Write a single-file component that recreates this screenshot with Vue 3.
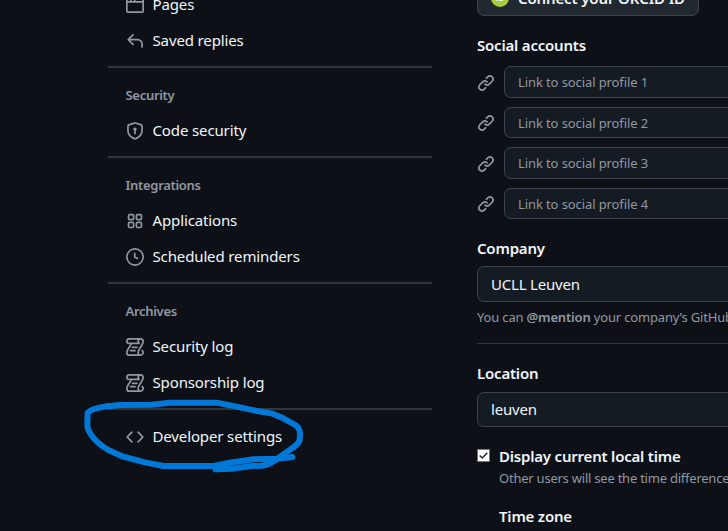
<script setup>
const icons = {
  browser: 'M0 2.75C0 1.784.784 1 1.75 1h12.5c.966 0 1.75.784 1.75 1.75v10.5A1.75 1.75 0 0 1 14.25 15H1.75A1.75 1.75 0 0 1 0 13.25ZM14.5 6h-13v7.25c0 .138.112.25.25.25h12.5a.25.25 0 0 0 .25-.25Zm-6-3.5v2h6V2.75a.25.25 0 0 0-.25-.25ZM5 2.5v2h2v-2Zm-3.25 0a.25.25 0 0 0-.25.25V4.5h2v-2Z',
  reply: 'M6.78 1.97a.75.75 0 0 1 0 1.06L3.81 6h6.44A4.75 4.75 0 0 1 15 10.75v2.5a.75.75 0 0 1-1.5 0v-2.5a3.25 3.25 0 0 0-3.25-3.25H3.81l2.97 2.97a.749.749 0 0 1-.326 1.275.749.749 0 0 1-.734-.215L1.47 7.28a.75.75 0 0 1 0-1.06l4.25-4.25a.75.75 0 0 1 1.06 0Z',
  shield: 'm8.533.133 5.25 1.68A1.75 1.75 0 0 1 15 3.48V7c0 1.566-.32 3.182-1.303 4.682-.983 1.498-2.585 2.813-5.032 3.855a1.697 1.697 0 0 1-1.33 0c-2.447-1.042-4.049-2.357-5.032-3.855C1.32 10.182 1 8.566 1 7V3.48a1.75 1.75 0 0 1 1.217-1.667l5.25-1.68a1.748 1.748 0 0 1 1.066 0Zm-.61 1.429.001.001-5.25 1.68a.251.251 0 0 0-.174.237V7c0 1.36.275 2.666 1.057 3.859.784 1.194 2.121 2.342 4.366 3.298a.196.196 0 0 0 .154 0c2.245-.957 3.582-2.103 4.366-3.297C13.225 9.666 13.5 8.358 13.5 7V3.48a.25.25 0 0 0-.174-.238l-5.25-1.68a.25.25 0 0 0-.153 0ZM9.5 6.5c0 .536-.286 1.032-.75 1.3v2.45a.75.75 0 0 1-1.5 0V7.8A1.5 1.5 0 1 1 9.5 6.5Z',
  apps: 'M3.25 1.5h2.5A1.75 1.75 0 0 1 7.5 3.25v2.5A1.75 1.75 0 0 1 5.75 7.5h-2.5A1.75 1.75 0 0 1 1.5 5.75v-2.5A1.75 1.75 0 0 1 3.25 1.5ZM3 3v3h3V3ZM10.25 1.5h2.5a1.75 1.75 0 0 1 1.75 1.75v2.5a1.75 1.75 0 0 1-1.75 1.75h-2.5A1.75 1.75 0 0 1 8.5 5.75v-2.5a1.75 1.75 0 0 1 1.75-1.75ZM10 3v3h3V3ZM3.25 8.5h2.5a1.75 1.75 0 0 1 1.75 1.75v2.5a1.75 1.75 0 0 1-1.75 1.75h-2.5a1.75 1.75 0 0 1-1.75-1.75v-2.5A1.75 1.75 0 0 1 3.25 8.5ZM3 10v3h3v-3ZM10.25 8.5h2.5a1.75 1.75 0 0 1 1.75 1.75v2.5a1.75 1.75 0 0 1-1.75 1.75h-2.5a1.75 1.75 0 0 1-1.75-1.75v-2.5a1.75 1.75 0 0 1 1.75-1.75ZM10 10v3h3v-3Z',
  clock: 'M8 0a8 8 0 1 1 0 16A8 8 0 0 1 8 0ZM1.5 8a6.5 6.5 0 1 0 13 0 6.5 6.5 0 0 0-13 0Zm7-3.25v2.992l2.028.812a.75.75 0 0 1-.557 1.392l-2.5-1A.751.751 0 0 1 7 8.25v-3.5a.75.75 0 0 1 1.5 0Z',
  log: 'M5 8.25a.75.75 0 0 1 .75-.75h4a.75.75 0 0 1 0 1.5h-4A.75.75 0 0 1 5 8.25ZM4 10.5A.75.75 0 0 0 4 12h4a.75.75 0 0 0 0-1.5H4ZM13-.005c1.654 0 3 1.328 3 3 0 .982-.338 1.933-.783 2.818-.443.879-1.028 1.758-1.582 2.588l-.011.017c-.568.853-1.104 1.659-1.501 2.446-.398.789-.623 1.494-.623 2.136a1.5 1.5 0 1 0 2.333-1.248.75.75 0 0 1 .834-1.246A3 3 0 0 1 13 16H3a3 3 0 0 1-3-3c0-1.582.891-3.135 1.777-4.506.209-.322.418-.637.623-.946.473-.709.923-1.386 1.287-2.048H2.51c-.576 0-1.381-.133-1.907-.783A2.68 2.68 0 0 1 0 2.995a3 3 0 0 1 3-3Zm0 1.5a1.5 1.5 0 0 0-1.5 1.5c0 .476.223.834.667 1.132A.75.75 0 0 1 11.75 5.5H5.368c-.467 1.003-1.141 2.015-1.773 2.963-.192.289-.381.571-.558.845C2.13 10.711 1.5 11.916 1.5 13A1.5 1.5 0 0 0 3 14.5h7.401A2.989 2.989 0 0 1 10 13c0-.979.338-1.928.784-2.812.441-.874 1.023-1.748 1.575-2.576l.017-.026c.568-.853 1.103-1.658 1.501-2.448.398-.79.623-1.497.623-2.143 0-.838-.669-1.5-1.5-1.5Zm-10 0a1.5 1.5 0 0 0-1.5 1.5c0 .321.1.569.27.778.097.12.325.227.74.227h7.674A2.737 2.737 0 0 1 10 2.995c0-.546.146-1.059.401-1.5Z',
  code: 'm11.28 3.22 4.25 4.25a.75.75 0 0 1 0 1.06l-4.25 4.25a.749.749 0 0 1-1.275-.326.749.749 0 0 1 .215-.734L13.94 8l-3.72-3.72a.749.749 0 0 1 .326-1.275.749.749 0 0 1 .734.215Zm-6.56 0a.751.751 0 0 1 1.042.018.751.751 0 0 1 .018 1.042L2.06 8l3.72 3.72a.749.749 0 0 1-.326 1.275.749.749 0 0 1-.734-.215L.47 8.53a.75.75 0 0 1 0-1.06Z',
  link: 'm7.775 3.275 1.25-1.25a3.5 3.5 0 1 1 4.95 4.95l-2.5 2.5a3.5 3.5 0 0 1-4.95 0 .751.751 0 0 1 .018-1.042.751.751 0 0 1 1.042-.018 1.998 1.998 0 0 0 2.83 0l2.5-2.5a2.002 2.002 0 0 0-2.83-2.83l-1.25 1.25a.751.751 0 0 1-1.042-.018.751.751 0 0 1-.018-1.042Zm-4.69 9.64a1.998 1.998 0 0 0 2.83 0l1.25-1.25a.751.751 0 0 1 1.042.018.751.751 0 0 1 .018 1.042l-1.25 1.25a3.5 3.5 0 1 1-4.95-4.95l2.5-2.5a3.5 3.5 0 0 1 4.95 0 .751.751 0 0 1-.018 1.042.751.751 0 0 1-1.042.018 1.998 1.998 0 0 0-2.83 0l-2.5 2.5a1.998 1.998 0 0 0 0 2.83Z',
}

const sections = [
  { items: [['browser', 'Pages'], ['reply', 'Saved replies']] },
  { title: 'Security', items: [['shield', 'Code security']] },
  { title: 'Integrations', items: [['apps', 'Applications'], ['clock', 'Scheduled reminders']] },
  { title: 'Archives', items: [['log', 'Security log'], ['log', 'Sponsorship log']] },
  { items: [['code', 'Developer settings']] },
]
</script>

<template>
  <div class="page">
    <nav class="sidebar">
      <section v-for="(section, i) in sections" :key="i" class="group">
        <h3 v-if="section.title" class="group-title">{{ section.title }}</h3>
        <a v-for="[icon, label] in section.items" :key="label" class="nav-item">
          <svg class="icon" viewBox="0 0 16 16"><path fill-rule="evenodd" :d="icons[icon]" /></svg>
          <span class="nav-text">{{ label }}</span>
        </a>
      </section>
    </nav>

    <main class="form">
      <button class="orcid" type="button">
        <span class="orcid-badge">iD</span>
        <span>Connect your ORCID ID</span>
      </button>

      <h4 class="label social-label">Social accounts</h4>
      <div class="social">
        <div v-for="n in 4" :key="n" class="social-row">
          <svg class="icon link-icon" viewBox="0 0 16 16"><path :d="icons.link" /></svg>
          <div class="field small">Link to social profile {{ n }}</div>
        </div>
      </div>

      <h4 class="label company-label">Company</h4>
      <div class="field company">UCLL Leuven</div>
      <p class="note">You can <b>@mention</b> your company’s GitHub organization to link it.</p>
      <hr class="rule" />

      <h4 class="label location-label">Location</h4>
      <div class="field location">leuven</div>

      <div class="check-row">
        <span class="checkbox">
          <svg viewBox="0 0 13 13"><path d="M2 6.5 5 9.4 11 3.2" /></svg>
        </span>
        <div class="check-body">
          <h4 class="label time-label">Display current local time</h4>
          <p class="hint">Other users will see the time difference from their local time.</p>
          <h4 class="label zone-label">Time zone</h4>
        </div>
      </div>
    </main>

    <svg class="marker" viewBox="0 0 750 300">
      <path d="M115 49 L150 45 L245 44 L300 38 L440 38 L500 50 L562 63 L608 71 L640 85 L665 99 Q690 110 690 130 L689 150 Q686 162 670 172 L622 206 Q598 225 575 227 L545 228 L485 236 L437 238" />
      <path d="M667 201 L620 206 L550 208 L480 218 L430 228 L280 228 L225 217 L160 200 L115 180 Q85 163 66 138 Q52 120 52 106 L53 68 Q64 55 115 48" />
    </svg>
  </div>
</template>

<style>
body {
  background: #0d1117;
}
</style>

<style scoped>
.page {
  position: relative;
  display: flex;
  width: 728px;
  height: 531px;
  overflow: hidden;
  background: #0d1117;
  color: #f0f6fc;
  font-family: "Noto Sans", "Open Sans", sans-serif;
  font-size: 15px;
  letter-spacing: -0.2px;
  white-space: nowrap;
}
.sidebar {
  flex: none;
  width: 324px;
  margin: -13px 0 0 108px;
}
.group + .group {
  margin-top: 7px;
  border-top: 2px solid #2f353d;
}
.group:last-child {
  padding-top: 9px;
}
.group-title {
  height: 45px;
  margin: 0;
  padding: 9px 0 0 17.5px;
  box-sizing: border-box;
  font-size: 13px;
  line-height: 36px;
  font-weight: 600;
  letter-spacing: -0.3px;
  color: #9198a1;
}
.nav-item {
  display: flex;
  align-items: center;
  gap: 8.5px;
  height: 36px;
  padding-left: 18px;
}
.nav-text {
  padding-bottom: 2px;
  letter-spacing: -0.13px;
}
.icon {
  flex: none;
  width: 18px;
  height: 18px;
  fill: #9198a1;
}
.form {
  flex: none;
  width: 320px;
  margin: -20px 0 0 45px;
}
.orcid {
  display: flex;
  align-items: center;
  gap: 9px;
  box-sizing: border-box;
  width: 222px;
  height: 36px;
  padding: 0 0 0 13px;
  border: 1px solid #3d444d;
  border-radius: 7px;
  background: #212830;
  color: #f0f6fc;
  font: inherit;
  font-weight: 600;
  letter-spacing: -0.13px;
  white-space: nowrap;
}
.orcid-badge {
  width: 18px;
  height: 18px;
  border-radius: 50%;
  background: #a6ce39;
  color: #fff;
  font-size: 10px;
  line-height: 17px;
  text-align: center;
}
.label {
  margin: 0;
  font-size: 15px;
  line-height: 24px;
  font-weight: 600;
}
.social-label {
  margin-top: 17px;
}
.social {
  display: grid;
  gap: 9px;
  margin-top: 9px;
}
.social-row {
  display: flex;
  align-items: center;
  gap: 9px;
}
.link-icon {
  margin-top: 2px;
}
.field {
  flex: 1;
  box-sizing: border-box;
  height: 36px;
  padding-left: 13px;
  border: 1px solid #3d444d;
  border-radius: 7px;
  background: #151b23;
  line-height: 34px;
}
.field.small {
  height: 31.5px;
  font-size: 13px;
  line-height: 30px;
  letter-spacing: -0.1px;
  color: #9198a1;
}
.company-label {
  margin-top: 17px;
}
.company {
  margin-top: 6px;
}
.note {
  margin: 5px 0 0;
  font-size: 13px;
  line-height: 20px;
  letter-spacing: -0.17px;
  color: #9198a1;
}
.note b {
  font-weight: 600;
}
.rule {
  height: 1px;
  margin: 16px 0 17px;
  border: 0;
  background: #2f353d;
}
.location-label {
  margin-bottom: 7px;
}
.location {
  height: 35px;
  line-height: 32px;
}
.check-row {
  display: flex;
  gap: 9px;
  margin-top: 17px;
}
.checkbox {
  box-sizing: border-box;
  width: 13px;
  height: 13px;
  margin-top: 5px;
  border: 1px solid #767676;
  background: #fff;
}
.checkbox svg {
  display: block;
  width: 11px;
  height: 11px;
  fill: none;
  stroke: #222;
  stroke-width: 1.7;
}
.hint {
  margin: 0;
  font-size: 13px;
  line-height: 20px;
  letter-spacing: -0.23px;
  color: #9198a1;
}
.zone-label {
  margin-top: 16px;
}
.marker {
  position: absolute;
  left: 70px;
  top: 390px;
  width: 250px;
  height: 100px;
  fill: none;
  stroke: #0078d7;
  stroke-width: 18;
  stroke-linecap: round;
  stroke-linejoin: round;
}
</style>
